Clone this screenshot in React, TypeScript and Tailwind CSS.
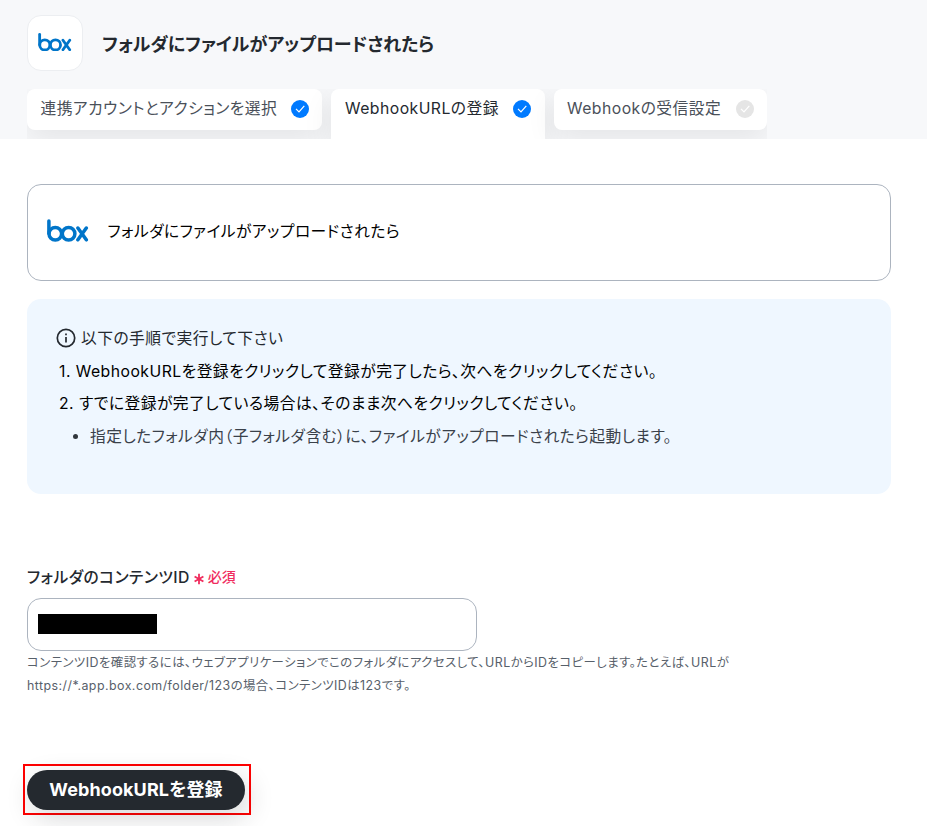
function BoxLogo({ className }: { className: string }) {
  return (
    <svg viewBox="0 0 42 23" className={className} fill="none" stroke="#0075c9" strokeWidth="3.5" strokeLinecap="round">
      <path d="M1.9 1.9V14.6" />
      <circle cx="8.3" cy="14.8" r="6.3" />
      <circle cx="21.6" cy="14.8" r="6.3" />
      <path d="M30.9 9L39.3 20.8M39.3 9L30.9 20.8" />
    </svg>
  );
}

function Check({ className }: { className: string }) {
  return (
    <svg viewBox="0 0 18 18" className={`size-[18px] shrink-0 ${className}`}>
      <circle cx="9" cy="9" r="9" fill="currentColor" />
      <path d="M5 8.8L8 11.8L13.3 5.9" fill="none" stroke="white" strokeWidth="1.2" />
    </svg>
  );
}

const shadow = "shadow-[0_10px_30px_rgba(0,0,0,0.08)]";

export default function App() {
  return (
    <div className="h-[826px] w-[927px] overflow-hidden bg-white font-['Inter','Noto_Sans_CJK_JP',sans-serif] text-[15.75px] tracking-[0.47px] text-[#24292f] [font-feature-settings:'palt']">
      <header className="h-[139px] bg-[#f7f8fa] pl-[27px] pt-[15px]">
        <div className="flex h-[56px] items-center">
          <div className="flex size-[56px] items-center justify-center rounded-[14px] border border-[#eceef1] bg-white pb-[2px]">
            <BoxLogo className="h-[18.5px] w-[34px]" />
          </div>
          <h1 className="ml-[19px] mt-[4px] whitespace-nowrap text-[18px] font-semibold leading-6 tracking-[-0.02px]">フォルダにファイルがアップロードされたら</h1>
        </div>
        <nav className="mt-[18px] flex h-[50px] w-[740px] gap-[9px] overflow-hidden whitespace-nowrap leading-6 text-[#4a5059]">
          <div className={`flex h-[41px] w-[295px] items-start justify-between rounded-[8px] bg-white pl-[13.5px] pr-[13px] pt-[8px] ${shadow}`}>
            <span>連携アカウントとアクションを選択</span>
            <Check className="mt-[3px] text-[#007aff]" />
          </div>
          <div className={`flex h-[50px] w-[214px] items-start justify-between rounded-t-[8px] bg-white px-[14px] pt-[8px] text-[#24292f] ${shadow}`}>
            <span>WebhookURLの登録</span>
            <Check className="mt-[3px] text-[#007aff]" />
          </div>
          <div className={`flex h-[41px] w-[213px] items-start justify-between rounded-[8px] bg-white px-[13px] pt-[8px] ${shadow}`}>
            <span>Webhookの受信設定</span>
            <Check className="mt-[3px] text-[#e5e5e5]" />
          </div>
        </nav>
      </header>
      <main className="px-[27px] pt-[45px]">
        <section className="flex h-[97px] w-[864px] items-center rounded-[14px] border border-[#acb4bf] pl-[19px] text-black">
          <BoxLogo className="mb-[4px] h-[23px] w-[42px]" />
          <span className="mb-[1px] ml-[18.5px]">フォルダにファイルがアップロードされたら</span>
        </section>
        <section className="mt-[18px] h-[195px] w-[864px] rounded-[14px] bg-[#eff7ff] pl-[29px] pt-[28px] leading-6">
          <div className="flex items-center">
            <svg viewBox="0 0 20 20" className="mb-[2px] size-[20px]" fill="none" stroke="currentColor" strokeWidth="1.7">
              <circle cx="10" cy="10" r="8.7" />
              <path d="M10 9V14.5M10 5.6V7.2" />
            </svg>
            <span className="ml-[5px]">以下の手順で実行して下さい</span>
          </div>
          <p className="ml-[3px] mt-[9px] text-black">1. WebhookURLを登録をクリックして登録が完了したら、次へをクリックしてください。</p>
          <p className="ml-[3px] mt-[8px] text-black">2. すでに登録が完了している場合は、そのまま次へをクリックしてください。</p>
          <div className="ml-[17px] mt-[9px] flex items-center text-[#3a414a]">
            <i className="mb-[2px] size-[5px] rounded-full bg-[#30363d]" />
            <span className="ml-[12px]">指定したフォルダ内（子フォルダ含む）に、ファイルがアップロードされたら起動します。</span>
          </div>
        </section>
        <section className="mt-[72px]">
          <div className="flex h-6 items-center leading-6">
            <span className="font-medium">フォルダのコンテンツID</span>
            <svg viewBox="0 0 10 12" className="ml-[4px] mt-[1px] h-[12px] w-[10px]" stroke="#f02d5e" strokeWidth="1.8">
              <path d="M5 .8V11.2M.6 3.4L9.4 8.6M9.4 3.4L.6 8.6" />
            </svg>
            <span className="mb-[2px] ml-[4px] text-[14px] font-medium tracking-normal text-[#f02d5e]">必須</span>
          </div>
          <div className="mt-[8px] flex h-[53px] w-[450px] items-center rounded-[14px] border border-[#acb4bf] pb-[1px] pl-[10px]">
            <i className="mb-[1px] h-[20px] w-[119px] bg-black" />
          </div>
          <p className="whitespace-nowrap text-[12.4px] leading-[23px] tracking-[0.46px] text-[#57606a]">
            コンテンツIDを確認するには、ウェブアプリケーションでこのフォルダにアクセスして、URLからIDをコピーします。たとえば、URLが<br />
            https://*.app.box.com/folder/123の場合、コンテンツIDは123です。
          </p>
        </section>
        <div className="-ml-[4px] mt-[67px] flex h-[51px] w-[228px] items-center border-2 border-[#ff0000] pl-[2px]">
          <button className="h-[40px] w-[218px] whitespace-nowrap rounded-full bg-[#24292f] text-[18px] font-bold tracking-[0.1px] text-white shadow-[4px_8px_26px_rgba(36,41,47,0.18)]">
            WebhookURLを登録
          </button>
        </div>
      </main>
    </div>
  );
}
